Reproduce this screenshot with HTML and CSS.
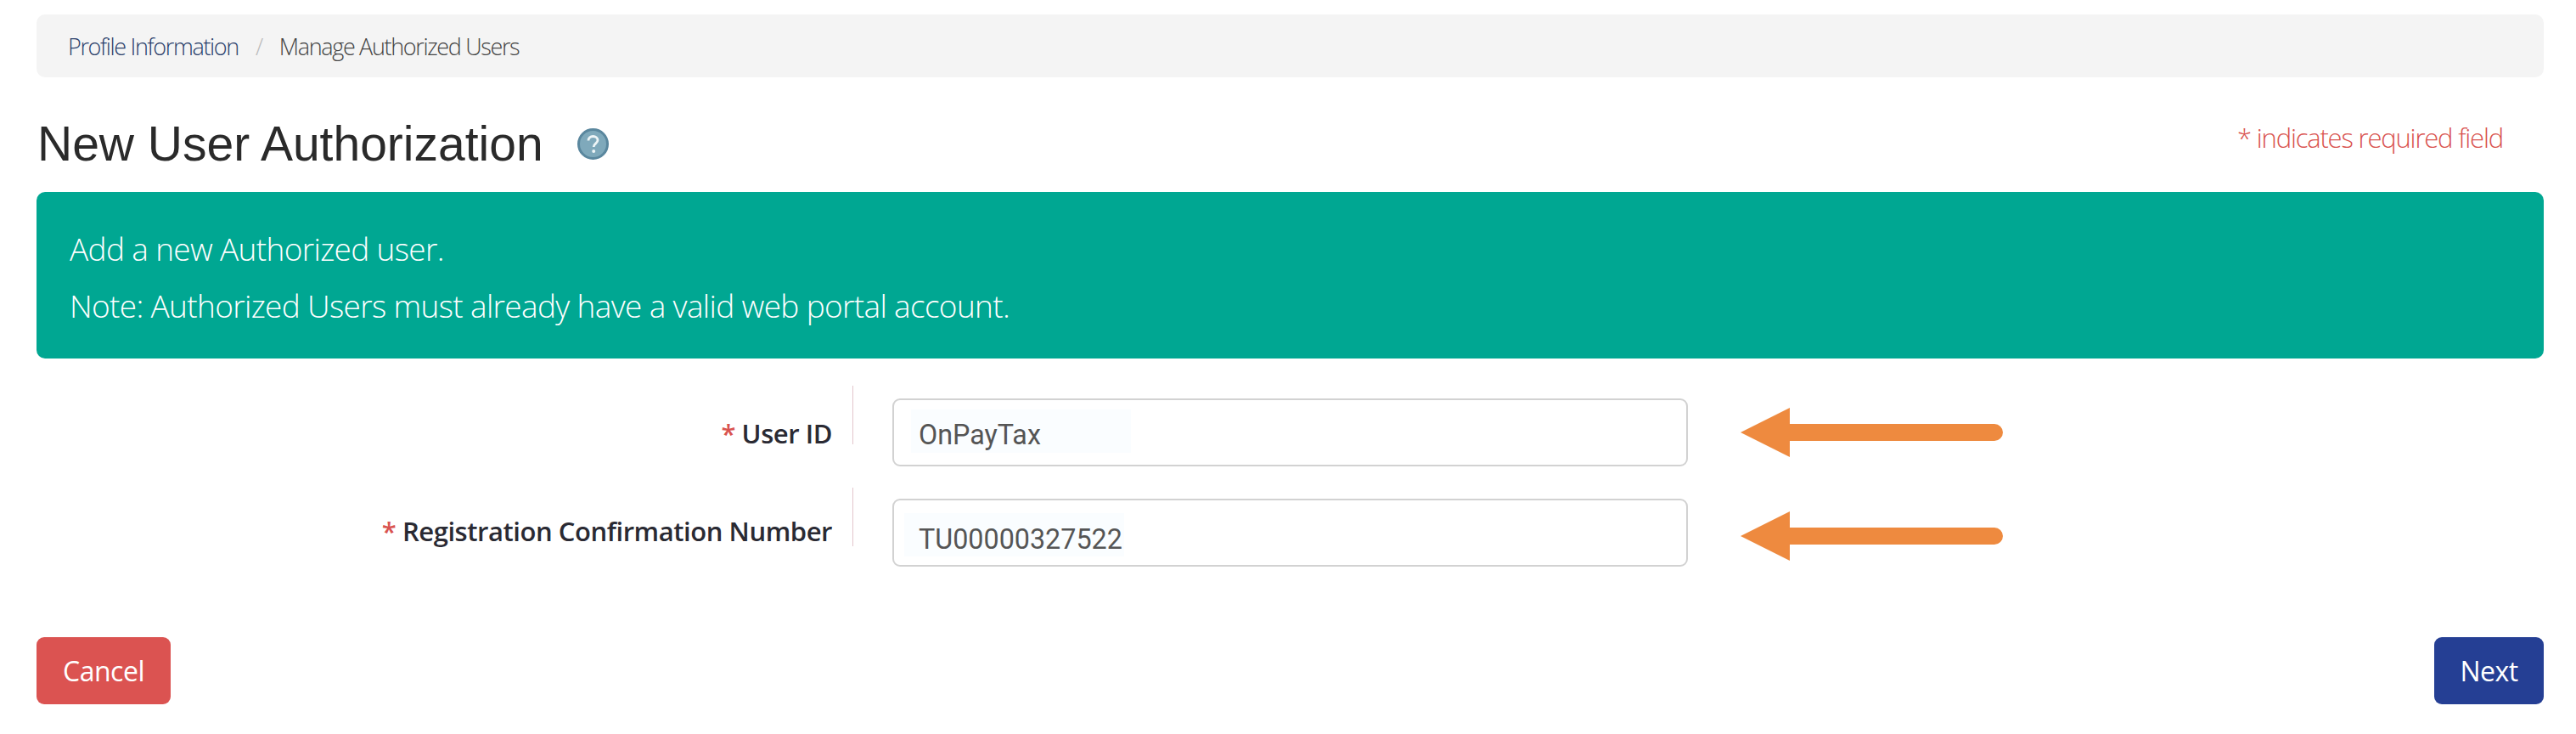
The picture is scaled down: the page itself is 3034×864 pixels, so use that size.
FILE: index.html
```html
<!DOCTYPE html>
<html lang="en">
<head>
<meta charset="utf-8">
<title>New User Authorization</title>
<link rel="stylesheet" href="styles.css">
</head>
<body>
<main class="page">
  <nav class="crumbs">
    <a class="crumb-link">Profile Information</a>
    <span class="crumb-sep">/</span>
    <span class="crumb-current">Manage Authorized Users</span>
  </nav>
  <header class="head">
    <h1 class="title">New User Authorization</h1>
    <svg class="help" viewBox="0 0 37 37" aria-hidden="true">
      <circle cx="18.5" cy="18.5" r="17" fill="#7fa9bb" stroke="#5a879e" stroke-width="3"/>
      <path d="M13 14.5c0-3.2 2.400-5 5.500-5s5.500 1.800 5.500 4.600c0 3.800-4.800 3.900-4.800 7.900" fill="none" stroke="#eef5f7" stroke-width="2.800"/>
      <circle cx="19.200" cy="27" r="2" fill="#eef5f7"/>
    </svg>
    <p class="req-note">* indicates required field</p>
  </header>
  <section class="alert">
    <p>Add a new Authorized user.</p>
    <p>Note: Authorized Users must already have a valid web portal account.</p>
  </section>
  <form class="form">
    <div class="row row-first">
      <label class="label"><span class="star">*</span> User ID</label>
      <div class="field"><span class="value">OnPayTax</span></div>
      <svg class="arrow" viewBox="0 0 309 58" aria-hidden="true">
        <path d="M0 29 58 0V19H299a10 10 0 0 1 0 20H58V58Z" fill="#ee8a3f"/>
      </svg>
    </div>
    <div class="row row-second">
      <label class="label"><span class="star">*</span> Registration Confirmation Number</label>
      <div class="field"><span class="value">TU00000327522</span></div>
      <svg class="arrow" viewBox="0 0 309 58" aria-hidden="true">
        <path d="M0 29 58 0V19H299a10 10 0 0 1 0 20H58V58Z" fill="#ee8a3f"/>
      </svg>
    </div>
  </form>
  <div class="actions">
    <button class="btn btn-cancel" type="button">Cancel</button>
    <button class="btn btn-next" type="button">Next</button>
  </div>
</main>
</body>
</html>
```
FILE: styles.css
```css
* { box-sizing: border-box; }
html, body { margin: 0; background: #fff; }
body { font-family: "Open Sans", "Noto Sans", sans-serif; height: 864px; overflow: hidden; }
.page { padding: 17px 38px 0 43px; }

.crumbs {
  height: 74px; display: flex; align-items: center; gap: 20px;
  padding: 0 37px; background: #f4f4f4; border-radius: 10px;
  font-size: 27px; font-weight: 300; letter-spacing: -1.35px;
}
.crumb-link { color: #2b3f6b; }
.crumb-sep { color: #bbb; }
.crumb-current { color: #444; }

.head { height: 135px; display: flex; align-items: center; padding-top: 22px; }
.title { margin: 0 0 0 1px; font: 400 57px/1 "Liberation Sans", Arial, sans-serif; color: #2a2a2a; }
.help { width: 37px; height: 37px; margin-left: 40px; }
.req-note { margin: 0 48px 16px auto; font-size: 31px; font-weight: 300; letter-spacing: -1.2px; color: #d9534f; }

.alert {
  height: 196px; padding: 26px 39px 22px; background: #00a792; border-radius: 10px;
  color: #fff; font-size: 37px; font-weight: 300; letter-spacing: -0.66px;
  display: flex; flex-direction: column; justify-content: center; gap: 22px;
}
.alert p { margin: 0; line-height: 45px; }

.form { padding-top: 32px; }
.row { display: flex; align-items: flex-start; }
.row-first { height: 120px; }
.row-second { height: 107px; }
.label {
  width: 962px; height: 69px; border-right: 1px solid #e3c6cd;
  padding: 36px 24px 0 0; text-align: right;
  font-size: 31px; font-weight: 650; letter-spacing: -0.45px; line-height: 40px; color: #2a2a33;
}
.row-second .label { padding-top: 31px; }
.star { color: #d9534f; }
.field {
  width: 937px; height: 80px; margin: 15px 0 0 46px;
  border: 2px solid #d2d2d2; border-radius: 9px; padding: 0 0 0 29px;
  font: 400 32.3px/1 Roboto, sans-serif; color: #555; display: flex; align-items: center;
}
.row-second .field { margin-top: 13px; }
.value {
  display: block; width: 259px; height: 51px; padding: 10px 0 0 9px; margin: 0 0 3px -9px;
  line-height: 41px; background: #fafdff;
}
.row-second .value { padding-left: 17px; padding-top: 11px; margin: 5px 0 0 -17px; }
.arrow { width: 309px; height: 58px; margin: 26px 0 0 62px; }
.row-second .arrow { margin-top: 28px; }

.actions { display: flex; justify-content: space-between; margin-top: 69px; }
.btn {
  height: 79px; border: 0; border-radius: 9px; color: #fff;
  font: 400 32px/1 "Open Sans", sans-serif; letter-spacing: -0.5px; padding: 0;
}
.btn-cancel { width: 158px; background: #db5351; }
.btn-next { width: 129px; background: #253f94; }
```
